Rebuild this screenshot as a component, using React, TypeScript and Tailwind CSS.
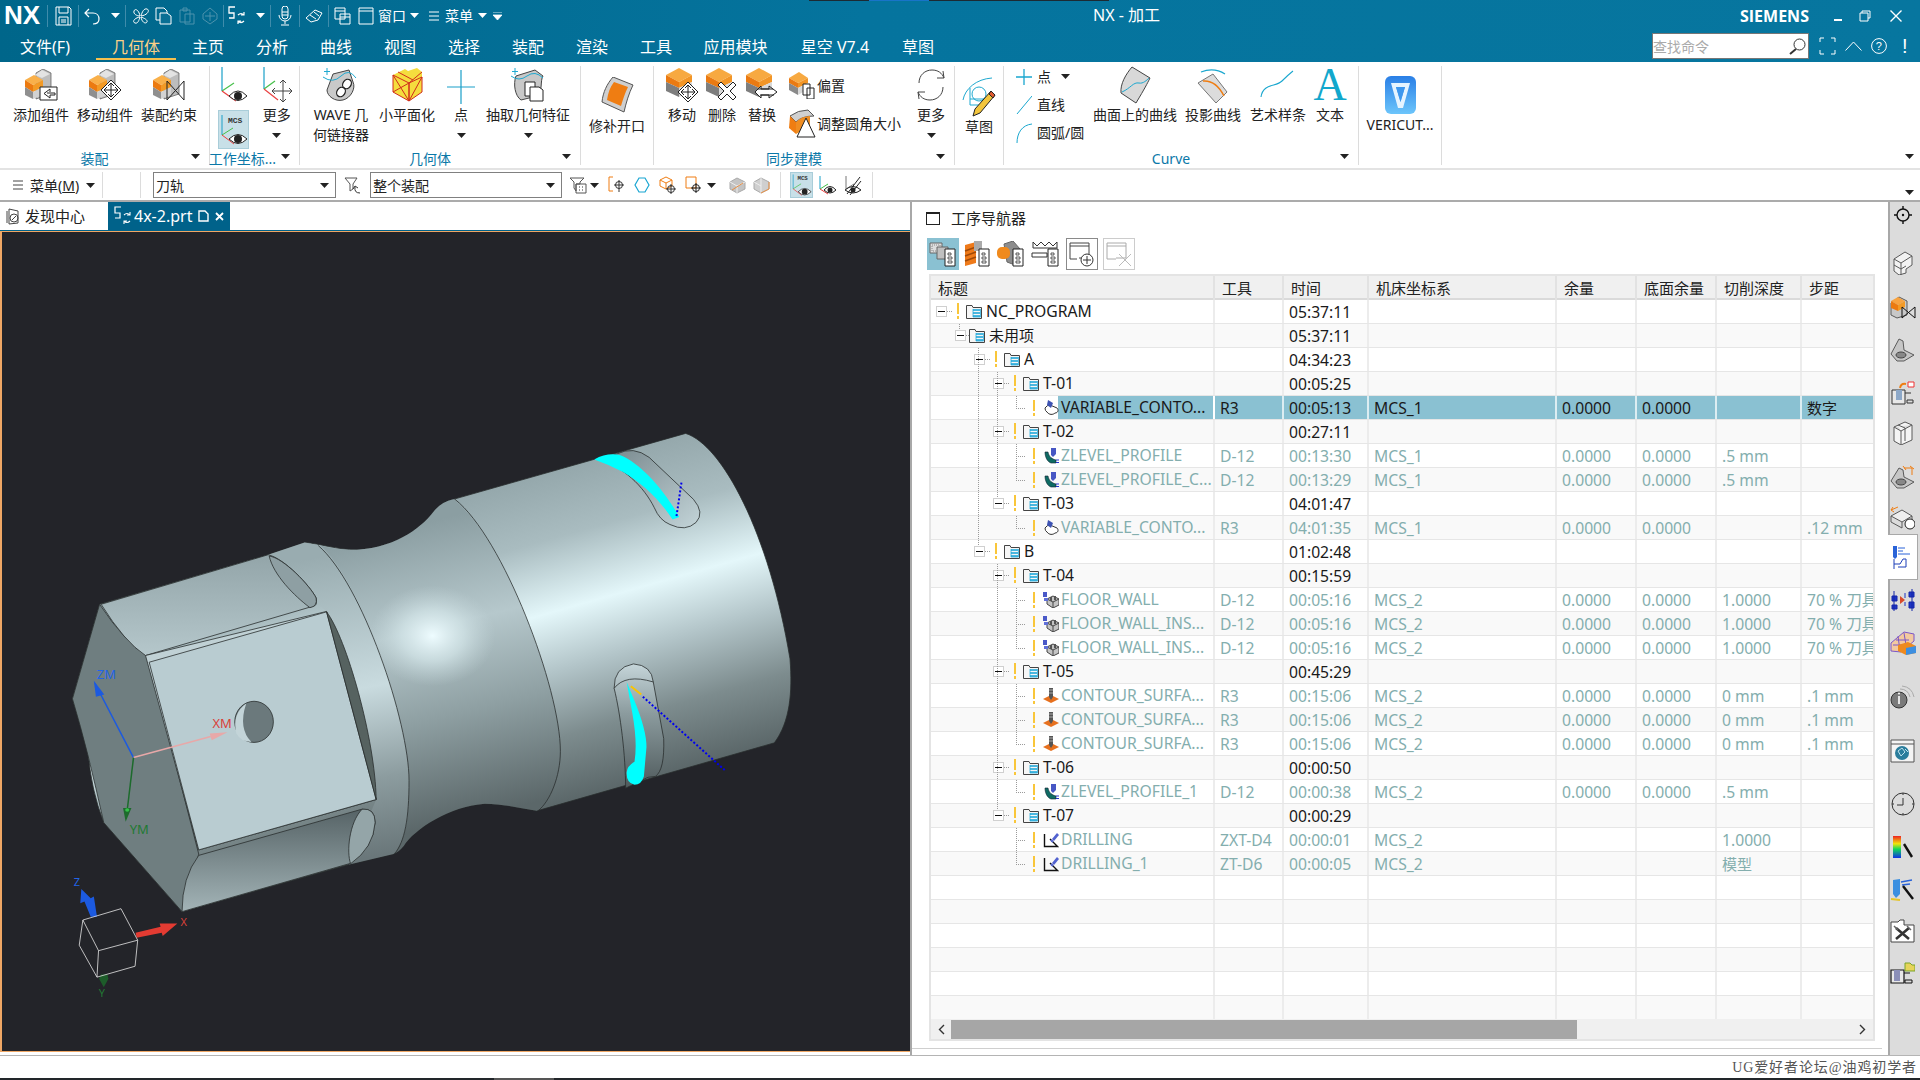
import React from "react";

const Svg = ({ w, h, children, className = "" }: { w: number; h: number; children: React.ReactNode; className?: string }) => (
  <svg width={w} height={h} viewBox={`0 0 ${w} ${h}`} className={`shrink-0 ${className}`} fill="none">
    {children}
  </svg>
);

const Caret = ({ c = "#222", className = "" }: { c?: string; className?: string }) => (
  <Svg w={9} h={5} className={className}>
    <path d="M0 0H9L4.5 5Z" fill={c} />
  </Svg>
);

const Sep = () => <div className="w-px h-[22px] bg-[#3f8cab] shrink-0" />;

const Slot = ({ w, children }: { w: string; children: React.ReactNode }) => (
  <div className={`${w} h-full flex items-center justify-center shrink-0`}>{children}</div>
);

/* ---------- title bar icons ---------- */
const W = "#ffffff";
const SaveI = () => (
  <Svg w={17} h={20}>
    <path d="M1 1H14L16 3V19H1Z M4 1V7H13V1 M4 19V11H13V19 M6 14H11 M6 16H11" stroke={W} />
  </Svg>
);
const UndoI = () => (
  <Svg w={18} h={18}>
    <path d="M6 2L2 6L6 10 M2 6H10C14 6 16 9 16 12S14 17 10 17" stroke={W} strokeWidth="1.2" />
  </Svg>
);
const FanI = () => (
  <Svg w={18} h={18}>
    <path d="M8 9C5 9 1 7 2 4S7 3 8 9ZM9 9C10 5 12 1 15 2S16 8 9 9ZM9 10C12 11 16 13 15 15S10 16 9 10ZM8 10C7 13 6 17 3 16S2 11 8 10Z" stroke={W} />
  </Svg>
);
const CopyI = () => (
  <Svg w={17} h={18}>
    <path d="M1 1H9L12 4V13H1Z" stroke={W} />
    <path d="M5 6H12L16 9V17H5Z" fill="#0a6f94" stroke={W} />
  </Svg>
);
const PasteI = () => (
  <Svg w={16} h={18}>
    <path d="M1 3H11V15H1Z M4 1H8V4H4Z M6 7H15V17H6Z" stroke="#4d93ad" />
  </Svg>
);
const TargetI = () => (
  <Svg w={18} h={18}>
    <path d="M9 1L16 7V12L9 17L2 12V7Z M9 5V14 M4 9H14" stroke="#4d93ad" />
  </Svg>
);
const SwapI = () => (
  <Svg w={18} h={20}>
    <path d="M7 1H1V7H6V12H1" stroke={W} strokeWidth="1.3" />
    <path d="M10 9Q13 6 16 9M16 6V9H13M16 15Q13 18 10 15M10 18V15H13" stroke={W} strokeWidth="1.2" />
  </Svg>
);
const MicI = () => (
  <Svg w={14} h={20}>
    <path d="M4 3a3 3 0 016 0V10a3 3 0 01-6 0ZM1 9a6 6 0 0012 0M7 15V18M3 19H11 M4 6H10 M4 9H10" stroke={W} />
  </Svg>
);
const EraserI = () => (
  <Svg w={18} h={16}>
    <path d="M1 10L10 2L17 5L13 12L6 14Z M5 7L11 11 M9 4L14 8" stroke={W} />
  </Svg>
);
const WinsI = () => (
  <Svg w={17} h={18}>
    <path d="M1 1H11V12H1Z M1 4H11 M6 7H16V17H6Z M6 10H16" stroke={W} />
  </Svg>
);
const WinI = () => (
  <Svg w={16} h={18}>
    <path d="M1 1H15V17H1Z M1 4H15" stroke={W} />
  </Svg>
);

/* ---------- ribbon icons ---------- */
const Stack = () => (
  <>
    <path d="M12 4L19 0L27 4V25L12 30Z" fill="#bdbdbd" stroke="#555" strokeWidth=".7" />
    <path d="M18 1L26 5L18 9L11 6Z" fill="#e3e3e3" />
    <path d="M1 11L10 6L19 11L9 16Z" fill="#f9b04a" />
    <path d="M1 11L9 16V23L1 18Z" fill="#ec7a10" />
    <path d="M9 16L19 11V18L9 23Z" fill="#f39a25" />
    <path d="M1 18L9 23V30L1 26Z" fill="#8f8f8f" />
    <path d="M9 23L19 18V26L9 30Z" fill="#d2d2d2" />
  </>
);
const Cube = () => (
  <>
    <path d="M1 7L14 0L27 7L14 14Z" fill="#f7a941" />
    <path d="M1 7L14 14V20L1 14Z" fill="#ea7a12" />
    <path d="M14 14L27 7V14L14 20Z" fill="#f29526" />
    <path d="M1 14L14 20V29L1 23Z" fill="#7e7e7e" />
    <path d="M14 20L27 14V23L14 29Z" fill="#d8d8d8" />
  </>
);
const MoveBadge = ({ x, y }: { x: number; y: number }) => (
  <g transform={`translate(${x} ${y})`}>
    <path d="M10 0L20 10L10 20L0 10Z" fill="#fff" stroke="#222" />
    <path d="M10 3V17M3 10H17M7 6L10 3L13 6M7 14L10 17L13 14M6 7L3 10L6 13M14 7L17 10L14 13" stroke="#222" />
  </g>
);
const XBadge = ({ x, y }: { x: number; y: number }) => (
  <g transform={`translate(${x} ${y})`}>
    <path d="M2 0L8 6L14 0L17 3L11 9L17 15L14 18L8 12L2 18L-1 15L5 9L-1 3Z" fill="#fff" stroke="#222" />
  </g>
);
const Add = () => (
  <Svg w={34} h={32}>
    <Stack />
    <path d="M16 18H33V31H16Z" fill="#fff" stroke="#222" />
    <path d="M31 24H23M26 20L20 24.500L26 29M26 20V23M26 26V29M31 24V26H26" stroke="#222" />
  </Svg>
);
const MoveC = () => (
  <Svg w={34} h={32}>
    <Stack />
    <MoveBadge x={13} y={11} />
  </Svg>
);
const Constr = () => (
  <Svg w={34} h={32}>
    <Stack />
    <path d="M15 12L32 31M32 12L15 31M15 12V31M32 12V31" stroke="#222" />
  </Svg>
);
const Wcs = () => (
  <Svg w={30} h={36}>
    <path d="M3 0V24" stroke="#1aa0c8" strokeWidth="1.2" />
    <path d="M3 24L15 16" stroke="#46c04a" strokeWidth="1.2" />
    <path d="M3 24L17 34" stroke="#e94040" strokeWidth="1.2" />
    <path d="M10 29Q19 19 28 29Q19 38 10 29Z" fill="#fff" stroke="#222" />
    <circle cx="19" cy="29" r="4" fill="#222" />
  </Svg>
);
const WcsMove = () => (
  <Svg w={32} h={36}>
    <path d="M3 0V22" stroke="#1aa0c8" strokeWidth="1.2" />
    <path d="M3 22L14 14" stroke="#46c04a" strokeWidth="1.2" />
    <path d="M3 22L17 33" stroke="#e94040" strokeWidth="1.2" />
    <path d="M22 13V35M11 24H31M19 16L22 13L25 16M19 32L22 35L25 32M14 21L11 24L14 27M28 21L31 24L28 27" stroke="#444" />
  </Svg>
);
const McsI = ({ small = false }: { small?: boolean }) => (
  <Svg w={small ? 22 : 30} h={small ? 24 : 34}>
    <g transform={small ? "scale(.72)" : undefined}>
      <path d="M3 2V22" stroke="#1aa0c8" />
      <path d="M3 22L14 15" stroke="#46c04a" />
      <path d="M3 22L15 31" stroke="#e94040" />
      <path d="M10 26Q19 17 28 26Q19 35 10 26Z" fill="#fff" stroke="#222" />
      <circle cx="19" cy="26" r="4" fill="#222" />
      <text x="9" y="10" fontSize="8" fontWeight="700" fill="#333" fontFamily="Liberation Mono">MCS</text>
    </g>
  </Svg>
);
const Wave = () => (
  <Svg w={36} h={34}>
    <path d="M10 6L26 2L30 14C33 20 28 30 20 32C12 34 4 28 4 22Z" fill="#c9c9c9" stroke="#444" />
    <path d="M0 9Q10 16 18 8T33 10" stroke="#1fa9d0" />
    <path d="M4 0V7M1 3.500H7" stroke="#1fa9d0" />
    <g stroke="#222" strokeWidth="1.3" fill="#fff">
      <ellipse cx="24" cy="16" rx="4" ry="5" transform="rotate(35 24 16)" />
      <ellipse cx="18" cy="24" rx="4" ry="5" transform="rotate(35 18 24)" />
    </g>
  </Svg>
);
const Facet = () => (
  <Svg w={32} h={34}>
    <path d="M2 7L14 1L17 3L26 0L31 4V24L18 33L2 24Z" fill="#f5dd3e" />
    <path d="M2 7L18 15V33L2 24Z M18 15L31 9V24L18 33Z M7 4L22 12 M2 7L18 33 M18 15L2 24 M31 4L18 15 M18 33L31 9" stroke="#d02c1c" />
  </Svg>
);
const Plus = () => (
  <Svg w={28} h={34}>
    <path d="M14 0V34M0 17H28" stroke="#1a9fc9" strokeWidth="1.2" />
  </Svg>
);
const Extract = () => (
  <Svg w={34} h={34}>
    <path d="M5 8L24 2L32 8C29 12 32 24 26 28L10 32C4 28 2 16 5 8Z" fill="#c8c8c8" stroke="#444" />
    <path d="M0 8Q8 14 16 8T32 10" stroke="#1fa9d0" />
    <path d="M4 0V7M1 3.500H7" stroke="#1fa9d0" />
    <path d="M14 14H24V28H14Z" fill="#fff" stroke="#222" />
    <path d="M19 19H28L32 22V33H19Z" fill="#fff" stroke="#222" />
  </Svg>
);
const Patch = () => (
  <Svg w={34} h={36}>
    <path d="M13 0L33 8C29 16 26 26 24 35L2 25C3 15 7 7 13 0Z" fill="#cfcfcf" stroke="#555" />
    <path d="M14 5L28 10C25 16 23 22 21 29L7 23C8 16 10 10 14 5Z" fill="#ef7d12" />
  </Svg>
);
const CubeBadge = ({ k }: { k: "m" | "x" | "s" }) => (
  <Svg w={34} h={34}>
    <Cube />
    {k === "m" && <MoveBadge x={13} y={14} />}
    {k === "x" && <XBadge x={14} y={14} />}
    {k === "s" && (
      <g stroke="#222" fill="#fff">
        <path d="M10 24L16 18V21H24V18L32 24L24 30V27H16V30Z" />
        <path d="M13 21H28M15 27H29" />
      </g>
    )}
  </Svg>
);
const Offset = () => (
  <Svg w={28} h={28}>
    <path d="M1 7L11 1L20 7L10 12Z" fill="#f7a941" />
    <path d="M1 7L10 12V17L1 12Z" fill="#ea7a12" />
    <path d="M10 12L20 7V12L10 17Z" fill="#f29526" />
    <path d="M1 12L10 17V24L1 19Z" fill="#8a8a8a" />
    <path d="M10 17L20 12V18L10 24Z" fill="#d8d8d8" />
    <path d="M15 13H22V24H15Z M19 17H26V28H19Z" fill="#fff" stroke="#222" />
  </Svg>
);
const Fillet = () => (
  <Svg w={28} h={30}>
    <path d="M2 8Q10 2 20 2L26 8Q14 8 8 14Z" fill="#d0d0d0" stroke="#555" />
    <path d="M2 8L8 14V26L1 20Z" fill="#ef7d12" />
    <path d="M8 14Q14 8 22 8V18L8 26Z" fill="#ef8d22" />
    <path d="M18 10L27 29H9Z" fill="#fff" stroke="#222" />
  </Svg>
);
const Refresh = () => (
  <Svg w={30} h={36}>
    <path d="M3 16C3 8 9 3 16 3C22 3 26 6 28 11M27 4L28 11L21 11" stroke="#444" />
    <path d="M27 20C27 28 21 33 14 33C8 33 4 30 2 25M3 32L2 25L9 25" stroke="#444" />
  </Svg>
);
const Sketch = () => (
  <Svg w={34} h={40}>
    <path d="M1 23C3 12 14 2 30 1" stroke="#1fa9d0" />
    <path d="M8 22H25M8 11V28H25" stroke="#1fa9d0" />
    <circle cx="17" cy="17" r="7" stroke="#1fa9d0" />
    <path d="M29 14L33 18L18 36L11 39L13 32Z" fill="#f3c53c" stroke="#222" />
    <path d="M29 14L33 18L31 21L27 17Z" fill="#e05a30" stroke="#222" />
  </Svg>
);
const OnSurf = () => (
  <Svg w={32} h={38}>
    <path d="M13 1L31 12C28 18 26 22 17 37L2 27C1 18 7 8 13 1Z" fill="#d8d8d8" stroke="#444" />
    <path d="M3 26C12 22 14 16 20 17C24 18 28 14 30 12" stroke="#1aa7cf" />
  </Svg>
);
const Project = () => (
  <Svg w={34} h={38}>
    <path d="M5 6Q18 1 29 8" stroke="#1aa7cf" strokeWidth="1.3" />
    <path d="M2 17L17 8L31 26L20 37Z" fill="#dcdcdc" stroke="#777" />
    <path d="M7 15Q20 14 28 30" stroke="#ef7d12" strokeWidth="1.5" />
  </Svg>
);
const Spline = () => (
  <Svg w={36} h={32}>
    <path d="M1 28C3 14 16 18 22 12S28 6 33 2" stroke="#1aa7cf" strokeWidth="1.1" />
  </Svg>
);
const Vericut = () => (
  <Svg w={33} h={40}>
    <defs>
      <linearGradient id="vc" x1="0" y1="0" x2="0" y2="1">
        <stop offset="0" stopColor="#2a7fe6" />
        <stop offset="1" stopColor="#6cc5fb" />
      </linearGradient>
    </defs>
    <rect x="1" y="1" width="31" height="38" rx="6" fill="url(#vc)" />
    <path d="M7 8H26L19 33H14Z M12 12L16.500 27L21 12Z" fill="#e6f4ff" fillRule="evenodd" />
    <path d="M12 12H21L16.500 27Z" fill="#3e97ee" />
  </Svg>
);
const CurvePlus = () => (
  <Svg w={16} h={16}>
    <path d="M8 0V16M0 8H16" stroke="#1aa7cf" strokeWidth="1.3" />
  </Svg>
);
const LineI = () => (
  <Svg w={16} h={20}>
    <path d="M1 19L16 1" stroke="#1aa7cf" />
  </Svg>
);
const ArcI = () => (
  <Svg w={16} h={20}>
    <path d="M1 20C1 10 6 2 16 1" stroke="#1aa7cf" />
  </Svg>
);

const Tool = ({ w, label, icon }: { w: string; label: React.ReactNode; icon: React.ReactNode }) => (
  <div className={`${w} flex flex-col items-center shrink-0 mt-[5px]`}>
    <div className="h-[36px] flex items-center justify-center">{icon}</div>
    <div className="mt-[2px] text-[14px] leading-[20px] text-[#222] text-center whitespace-nowrap">{label}</div>
  </div>
);

const Group = ({ w, label, caret, children, labelClass = "" }: { w: string; label: string; caret?: boolean; children: React.ReactNode; labelClass?: string }) => (
  <div className={`${w} shrink-0 h-[99px] flex flex-col border-r border-[#dcdcdc] mt-[4px]`}>
    <div className="flex-1 flex min-h-0 -mt-[4px]">{children}</div>
    <div className="h-[16px] relative text-[14px] leading-[20px] text-[#0b78a8] text-center whitespace-nowrap pr-[20px]">
      <span className={labelClass}>{label}</span>
      {caret && <Caret className="absolute right-[9px] top-[5px]" />}
    </div>
  </div>
);

const Ribbon = () => (
  <div className="h-[108px] shrink-0 bg-white border-b-2 border-[#e3e3e3] flex items-start relative">
    <Group w="w-[210px]" label="装配" caret>
      <div className="flex pl-[9px]">
        <Tool w="w-[64px]" label="添加组件" icon={<Add />} />
        <Tool w="w-[64px]" label="移动组件" icon={<MoveC />} />
        <Tool w="w-[64px]" label="装配约束" icon={<Constr />} />
      </div>
    </Group>
    <Group w="w-[90px]" label="工作坐标..." caret labelClass="-ml-[4px]">
      <div className="w-[45px] flex flex-col items-center pt-[5px] pl-[3px]">
        <Wcs />
        <div className="mt-[7px] w-[31px] h-[40px] bg-[#c8e0e8] border border-[#a9cdd9] flex items-center justify-center"><McsI /></div>
      </div>
      <div className="w-[45px] flex flex-col items-center pt-[5px]">
        <WcsMove />
        <div className="text-[14px] leading-[20px] text-[#222] mt-[2px]">更多</div>
        <Caret className="mt-[8px]" />
      </div>
    </Group>
    <Group w="w-[281px]" label="几何体" caret>
      <div className="flex pl-[4px]">
        <Tool w="w-[74px]" icon={<Wave />} label={<>WAVE 几<br />何链接器</>} />
        <Tool w="w-[58px]" icon={<Facet />} label="小平面化" />
        <Tool w="w-[50px]" icon={<div className="pt-[4px]"><Plus /></div>} label={<div className="flex flex-col items-center">点<Caret className="mt-[8px]" /></div>} />
        <Tool w="w-[84px]" icon={<Extract />} label={<div className="flex flex-col items-center">抽取几何特征<Caret className="mt-[8px]" /></div>} />
      </div>
    </Group>
    <Group w="w-[73px]" label="">
      <div className="w-full flex flex-col items-center pt-[15px]">
        <Patch />
        <div className="mt-[3px] text-[14px] leading-[20px] text-[#222] whitespace-nowrap">修补开口</div>
      </div>
    </Group>
    <Group w="w-[301px]" label="同步建模" caret>
      <div className="flex pl-[8px]">
        <Tool w="w-[40px]" icon={<CubeBadge k="m" />} label="移动" />
        <Tool w="w-[40px]" icon={<CubeBadge k="x" />} label="删除" />
        <Tool w="w-[40px]" icon={<CubeBadge k="s" />} label="替换" />
        <div className="w-[134px] flex flex-col pl-[6px] pt-[8px]">
          <div className="flex items-center h-[30px] gap-[1px] text-[14px] text-[#222]"><Offset />偏置</div>
          <div className="flex items-center h-[30px] mt-[8px] gap-[1px] text-[14px] text-[#222] whitespace-nowrap"><Fillet />调整圆角大小</div>
        </div>
        <div className="w-[30px] flex flex-col items-center pt-[5px]">
          <Refresh />
          <div className="mt-[2px] text-[14px] leading-[20px] text-[#222] whitespace-nowrap">更多</div>
          <Caret className="mt-[8px]" />
        </div>
      </div>
    </Group>
    <Group w="w-[49px]" label="">
      <div className="w-full flex flex-col items-center pt-[15px]">
        <Sketch />
        <div className="text-[14px] leading-[20px] text-[#222] whitespace-nowrap">草图</div>
      </div>
    </Group>
    <Group w="w-[355px]" label="Curve" caret>
      <div className="flex">
        <div className="w-[89px] flex flex-col pl-[12px] pt-[1px] text-[14px] text-[#222] shrink-0">
          <div className="h-[27px] flex items-center gap-[5px]"><CurvePlus /><span>点</span><Caret className="ml-[5px]" /></div>
          <div className="h-[27px] flex items-center gap-[5px] mt-[1px]"><LineI />直线</div>
          <div className="h-[27px] flex items-center gap-[5px] mt-[1px]"><ArcI /><span className="whitespace-nowrap">圆弧/圆</span></div>
        </div>
        <Tool w="w-[84px]" icon={<OnSurf />} label="曲面上的曲线" />
        <Tool w="w-[72px]" icon={<Project />} label="投影曲线" />
        <Tool w="w-[58px]" icon={<Spline />} label="艺术样条" />
        <Tool w="w-[46px]" icon={<span className="font-['Liberation_Serif',serif] text-[46px] leading-[36px] text-[#12a7cc]">A</span>} label="文本" />
      </div>
    </Group>
    <Group w="w-[83px]" label="">
      <div className="w-full flex flex-col items-center pt-[13px]">
        <Vericut />
        <div className="text-[14px] leading-[20px] text-[#222]">VERICUT...</div>
      </div>
    </Group>
    <Caret className="absolute right-[6px] top-[154px] -mt-[62px]" />
  </div>
);

/* ---------- selection bar ---------- */
const Funnel = () => (
  <Svg w={18} h={18}>
    <path d="M1 2H13L9 8V13L6 15V8Z" stroke="#555" />
    <path d="M16 17Q10 17 11 11M9 13L11 10L14 12" stroke="#333" />
  </Svg>
);
const SelBox = ({ w, label }: { w: string; label: string }) => (
  <div className={`${w} h-[26px] border border-[#808080] flex items-center justify-between pl-[2px] pr-[6px] text-[14px] text-[#222] shrink-0`}>
    {label}
    <Caret />
  </div>
);
const SelBar = () => (
  <div className="h-[32px] shrink-0 border-b-2 border-[#ababab] bg-white flex items-center relative text-[14px] text-[#222]">
    <div className="w-[102px] shrink-0 flex items-center pl-[13px] gap-[7px]">
      <Svg w={10} h={10}><path d="M0 1H10M0 5H10M0 9H10" stroke="#444" /></Svg>
      <span className="whitespace-nowrap">菜单(<u>M</u>)</span>
      <Caret />
    </div>
    <div className="w-px h-[26px] bg-[#dcdcdc]" />
    <div className="w-[37px]" />
    <div className="w-px h-[26px] bg-[#dcdcdc]" />
    <div className="w-[12px]" />
    <SelBox w="w-[183px]" label="刀轨" />
    <Slot w="w-[34px]"><Funnel /></Slot>
    <SelBox w="w-[192px]" label="整个装配" />
    <div className="w-[7px]" />
    <Svg w={18} h={18}><path d="M1 2H15L11 6V8H7V15L5 12V6Z M7 8H17V17H7Z" stroke="#555" /><path d="M10 11H11M13 11H14M10 14H11M13 14H14" stroke="#333" /></Svg>
    <Caret className="ml-[3px]" />
    <div className="w-[9px]" />
    <Svg w={18} h={18}><path d="M5 1H1V15H5" stroke="#ef7d12" /><path d="M11 4V16M6 9H16" stroke="#333" /><circle cx="11" cy="9" r="3.500" stroke="#333" /></Svg>
    <div className="w-[8px]" />
    <Svg w={16} h={16}><path d="M5 1H11L15 8L11 15H5L1 8Z" stroke="#18a5d2" strokeWidth="1.2" /></Svg>
    <div className="w-[9px]" />
    <Svg w={18} h={18}><path d="M7 1L13 4V10L7 13L1 10V4Z M1 4L7 7L13 4M7 7V13" stroke="#ef7d12" /><circle cx="12" cy="13" r="3.500" stroke="#333" /><path d="M12 8V18M7 13H17" stroke="#333" /></Svg>
    <div className="w-[8px]" />
    <Svg w={18} h={18}><path d="M1 1H11V12H1Z" stroke="#ef7d12" /><circle cx="11" cy="12" r="3.500" stroke="#222" /><path d="M11 7V17M6 12H16" stroke="#222" /></Svg>
    <Caret className="ml-[4px]" />
    <div className="w-[13px]" />
    <Svg w={17} h={17}><path d="M1 5L8 1L16 5V12L8 16L1 12Z" fill="#c4c4c4" stroke="#aaa" /><path d="M1 5L8 9L16 5M8 9V16" stroke="#eee" /><path d="M3 13L14 6" stroke="#e89045" /></Svg>
    <div className="w-[7px]" />
    <Svg w={17} h={17}><path d="M1 5L8 1L16 5V12L8 16L1 12Z" fill="#cfcfcf" stroke="#aaa" /><path d="M8 1V16M1 5L8 9" stroke="#eee" /><path d="M16 5V12L8 16" stroke="#e89045" /></Svg>
    <div className="w-[10px]" />
    <div className="w-px h-[26px] bg-[#dcdcdc]" />
    <div className="w-[9px]" />
    <div className="w-[23px] h-[26px] bg-[#c8e0e8] border border-[#a9cdd9] flex items-center justify-center"><McsI small /></div>
    <div className="w-[3px]" />
    <div className="w-[22px] flex justify-center"><Svg w={18} h={20}><path d="M2 1V14" stroke="#1aa0c8" /><path d="M2 14L10 9" stroke="#46c04a" /><path d="M2 14L10 19" stroke="#e94040" /><path d="M6 15Q12 8 18 15Q12 21 6 15Z" fill="#fff" stroke="#222" /><circle cx="12" cy="15" r="2.500" fill="#222" /></Svg></div>
    <div className="w-[4px]" />
    <div className="w-[22px] flex justify-center"><Svg w={18} h={20}><path d="M2 1V14L10 9" stroke="#777" /><path d="M1 15Q9 8 17 15Q9 21 1 15Z" fill="#fff" stroke="#222" /><circle cx="9" cy="15" r="2.500" fill="#222" /><path d="M3 19L16 2M6 20L17 6" stroke="#222" /></Svg></div>
    <div className="w-[8px]" />
    <div className="w-px h-[26px] bg-[#dcdcdc]" />
    <Caret className="absolute right-[6px] top-[20px]" />
  </div>
);

/* ---------- CAD view ---------- */
const NS = { vectorEffect: "non-scaling-stroke" as const };
const CadView = () => (
  <svg viewBox="0 232 910 821" className="w-full h-full block" preserveAspectRatio="none">
    <defs>
      <linearGradient id="body" gradientUnits="userSpaceOnUse" x1="1150" y1="90" x2="1400" y2="800">
        <stop offset="0" stopColor="#95a8ac" />
        <stop offset=".2" stopColor="#a9bcc0" />
        <stop offset=".42" stopColor="#e4f7fa" />
        <stop offset=".6" stopColor="#b2c4c8" />
        <stop offset=".8" stopColor="#7d8c8e" />
        <stop offset="1" stopColor="#5b6769" />
      </linearGradient>
      <radialGradient id="glow" gradientUnits="userSpaceOnUse" cx="825" cy="515" r="120">
        <stop offset="0" stopColor="#eefcff" />
        <stop offset=".5" stopColor="#d5e7ea" stopOpacity=".7" />
        <stop offset="1" stopColor="#c4d6da" stopOpacity="0" />
      </radialGradient>
      <linearGradient id="neck" gradientUnits="userSpaceOnUse" x1="760" y1="260" x2="960" y2="930">
        <stop offset="0" stopColor="#8b9ea2" />
        <stop offset=".35" stopColor="#b6c8cc" />
        <stop offset=".65" stopColor="#8e9fa2" />
        <stop offset="1" stopColor="#5b6769" />
      </linearGradient>
      <linearGradient id="flange" gradientUnits="userSpaceOnUse" x1="640" y1="320" x2="800" y2="1020">
        <stop offset="0" stopColor="#99acb0" />
        <stop offset=".45" stopColor="#c9dbdf" />
        <stop offset=".75" stopColor="#8c9c9f" />
        <stop offset="1" stopColor="#6a777a" />
      </linearGradient>
      <linearGradient id="pocketU" x1="0" y1="0" x2="0" y2="1">
        <stop offset="0" stopColor="#93a5a9" />
        <stop offset="1" stopColor="#b5c7cb" />
      </linearGradient>
      <linearGradient id="pocketL" x1="0" y1="0" x2="0" y2="1">
        <stop offset="0" stopColor="#566366" />
        <stop offset="1" stopColor="#a3b4b7" />
      </linearGradient>
      <linearGradient id="slotT" x1="0" y1="0" x2="1" y2="1">
        <stop offset="0" stopColor="#75858a" />
        <stop offset="1" stopColor="#c3d4d8" />
      </linearGradient>
      <linearGradient id="slotL" x1="0" y1="0" x2="0" y2="1">
        <stop offset="0" stopColor="#c5d5d9" />
        <stop offset=".4" stopColor="#8b9b9e" />
        <stop offset="1" stopColor="#4f5a5c" />
      </linearGradient>
    </defs>
    <g transform="translate(0 420) scale(.523 .4209)" stroke="#2a2e2f" strokeWidth=".8" fill="none">
      <path {...NS} fill="url(#body)" d="M345 1172L195 960Q170 880 165 790L135 665L187 440L510 322L580 293C610 295 640 310 680 310C760 305 810 250 830 215Q845 195 865 190L1310 33C1380 60 1470 270 1510 570C1515 650 1510 720 1480 770L1025 932C990 925 960 915 925 915C860 920 790 975 770 1015Q760 1030 750 1035L665 1060Z" />
      <path fill="url(#neck)" stroke="none" d="M610 300C640 310 660 310 680 310C760 305 810 250 830 215Q845 195 865 190C960 280 1070 640 1070 790C1070 850 1050 910 1025 932C990 925 960 915 925 915C860 920 790 975 770 1015Q760 1030 750 1035C775 1000 780 950 780 860C780 720 690 390 610 300Z" />
      <ellipse cx="825" cy="515" rx="120" ry="120" fill="url(#glow)" stroke="none" />
      <path fill="url(#flange)" stroke="none" d="M580 293L610 300C690 390 780 720 780 860C780 950 775 1000 750 1035L665 1060L717 905L622 458L510 322Z" />
      <path {...NS} d="M868 190C960 280 1070 640 1070 790C1070 850 1050 910 1027 932" />
      <path {...NS} d="M606 300C690 390 780 720 780 860C780 950 772 1005 752 1035" />
      <path {...NS} fill="#6f7e80" d="M187 440L135 665Q165 790 195 960L345 1172L377 1035L280 565Q235 530 187 440Z" />
      <path {...NS} fill="url(#pocketU)" d="M190 440L510 322C540 330 590 395 602 425Q605 445 595 445L275 562Q235 530 190 440Z" />
      <path {...NS} fill="#8e9fa3" d="M512 325C540 330 590 395 602 425Q605 445 590 448C560 420 520 370 512 325Z" />
      <path {...NS} fill="#c0d1d5" d="M275 562L622 457L717 905L377 1025Z" />
      <path {...NS} fill="#b9ccd1" d="M282 578L622 458L717 905L377 1025Z" />
      <path {...NS} fill="#566260" d="M622 458C660 520 715 760 717 905Z" />
      <path {...NS} fill="url(#pocketL)" d="M377 1038L690 928Q715 925 715 960Q712 1020 665 1058L345 1172Q345 1090 377 1038Z" />
      <path {...NS} fill="#94a5a8" d="M690 928C665 960 660 1030 668 1058Q712 1020 715 960Q715 925 690 928Z" />
      <ellipse {...NS} cx="483" cy="720" rx="37" ry="49" fill="#6b797c" />
      <path fill="#c3d4d8" stroke="none" d="M468 676Q440 700 449 748Q458 768 478 768Q452 735 468 676Z" />
      <path {...NS} fill="url(#slotT)" d="M1178 82Q1210 62 1240 90L1325 190Q1347 222 1330 245Q1310 268 1280 250Q1260 240 1250 210C1230 160 1190 110 1140 95Z" />
      <path fill="#00ffff" stroke="none" d="M1135 95Q1160 78 1185 85C1225 105 1270 170 1298 232L1285 238C1260 190 1225 150 1190 125Q1165 108 1135 95Z" />
      <path {...NS} fill="url(#slotL)" d="M1173 640Q1172 590 1210 582Q1245 585 1248 625L1268 760Q1270 835 1252 850L1238 852L1195 878C1195 800 1185 700 1173 640Z" />
      <path {...NS} d="M1173 640Q1195 605 1248 625" />
      <path fill="#00ffff" stroke="none" d="M1197 625L1212 670Q1235 740 1235 780L1230 850Q1225 870 1212 870Q1196 865 1197 840Q1198 825 1212 815Q1218 770 1208 700Z" />
      <path d="M1205 635L1225 655" stroke="#f8c400" strokeWidth="2" {...NS} />
      <path d="M1228 660L1385 835" stroke="#0000ee" strokeWidth="2" strokeDasharray="2 2" {...NS} />
      <path d="M1302 150L1292 235" stroke="#0000ee" strokeWidth="2" strokeDasharray="2 2" {...NS} />
      <path d="M252 805L178 628" stroke="#1c5ae0" strokeWidth="1.5" {...NS} />
      <path stroke="none" fill="#1c5ae0" d="M176 622L196 655L180 660Z" />
      <path d="M252 805L400 755" stroke="#e8a8a8" strokeWidth="1.5" {...NS} />
      <path stroke="none" fill="#e8a8a8" d="M432 745L398 748L402 764Z" />
      <path d="M252 805L240 930" stroke="#1d6b2c" strokeWidth="1.5" {...NS} />
      <path stroke="none" fill="#1d6b2c" d="M237 958L232 925L248 925Z" />
      <circle cx="240" cy="930" r="4" fill="#35c24a" stroke="none" />
      <path stroke="none" fill="#1c5ae0" d="M152 1118L170 1140L176 1136L182 1184L170 1184L158 1148L150 1152Z" />
      <path stroke="none" fill="#e33b32" d="M336 1200L302 1200L304 1208L256 1222L258 1234L306 1222L308 1230Z" />
      <path stroke="none" fill="#1d5c2a" d="M195 1352L186 1332L190 1322L202 1322L204 1332Z" />
      <g stroke="#e6e6e6">
        <path {...NS} d="M155 1192L228 1165L260 1240L185 1265Z" />
        <path {...NS} d="M185 1265L182 1328L255 1302L260 1240" />
        <path {...NS} d="M155 1192L148 1252L182 1328" />
      </g>
    </g>
    <g className="font-['Noto_Sans',sans-serif]" fontSize="13">
      <text x="95" y="680" fill="#2264e8">ZM</text>
      <text x="211" y="729" fill="#d9413a">XM</text>
      <text x="128" y="835" fill="#217a33">YM</text>
      <text x="72" y="888" fill="#2264e8" fontSize="11">Z</text>
      <text x="179" y="928" fill="#d9413a" fontSize="11">X</text>
      <text x="97" y="999" fill="#217a33" fontSize="11">Y</text>
    </g>
  </svg>
);

/* ---------- operation tree ---------- */
const Exclaim = () => (
  <Svg w={2} h={16}>
    <path d="M0 0H2V11H0Z M0 13H2V16H0Z" fill="#f9c63a" />
  </Svg>
);
const Folder = () => (
  <Svg w={16} h={15}>
    <path d="M.5 14.500V1.500H6L7 3.500H15.500V14.500Z" fill="#f6f6f6" stroke="#444" />
    <path d="M7 6H14M7 9H14M7 12H14" stroke="#13a3d8" strokeWidth="1.6" />
    <path d="M7 5V13H14.500V5" stroke="#13a3d8" strokeWidth=".7" />
  </Svg>
);
const Expander = () => (
  <div className="relative w-[11px] h-[11px] border border-[#d0d0d0] bg-white flex items-center justify-center shrink-0">
    <div className="w-[7px] h-px bg-[#111]" />
  </div>
);
const OpVar = () => (
  <Svg w={15} h={16}>
    <path d="M1 8Q3 5 6 5L13 8C15 10 14 13 11 13C9 15 5 15 3 12Q1 11 1 8Z" fill="#fff" stroke="#333" />
    <path d="M4 0L9 3L7 8L3 5Z" fill="#3d53b3" />
  </Svg>
);
const OpZ = () => (
  <Svg w={15} h={16}>
    <path d="M1 4H4C5 9 8 11 12 12V15H7C4 14 1 10 1 4Z" fill="#0e6b63" stroke="#123" strokeWidth=".6" />
    <path d="M7 0H12V6L9 9L7 7Z" fill="#4757c4" />
    <path d="M12 12H15M12 14.500H15" stroke="#2233cc" />
  </Svg>
);
const OpFloor = () => (
  <Svg w={16} h={16}>
    <path d="M4 7L10 4L16 7V13L10 16L4 12Z" fill="#c4c4c4" stroke="#444" />
    <path d="M4 7L10 10L16 7M10 10V16" stroke="#444" />
    <path d="M8 5V9M12 4V8" stroke="#555" strokeWidth="2" />
    <path d="M0 0H4V5H0Z" fill="#4a59c8" />
    <path d="M1 6H5V9H1Z" fill="#6170d8" />
  </Svg>
);
const OpContour = () => (
  <Svg w={16} h={16}>
    <path d="M0 11L8 7L16 11L8 15Z" fill="#e6701e" />
    <path d="M6 0H10V9L8 12L6 9Z" fill="#555" />
    <path d="M6 2H10M6 5H10" stroke="#aaa" />
  </Svg>
);
const OpDrill = () => (
  <Svg w={16} h={16}>
    <path d="M1.500 2V14.500H14.500L7 7" stroke="#111" strokeWidth="1.4" />
    <path d="M9 7L14 1L16 3L11 9Z" fill="#5262cf" />
    <path d="M8 8L10 10" stroke="#5262cf" strokeWidth="2" />
  </Svg>
);

type Row = {
  lv: number;
  name: string;
  op?: React.ReactNode;
  tool?: string;
  time: string;
  mcs?: string;
  st?: string;
  fl?: string;
  depth?: string;
  step?: string;
  sel?: boolean;
  noEx?: boolean;
};
const m1 = "MCS_1";
const m2 = "MCS_2";
const z = "0.0000";
const rows: Row[] = [
  { lv: 0, name: "NC_PROGRAM", time: "05:37:11" },
  { lv: 1, name: "未用项", time: "05:37:11", noEx: true },
  { lv: 2, name: "A", time: "04:34:23" },
  { lv: 3, name: "T-01", time: "00:05:25" },
  { lv: 4, name: "VARIABLE_CONTO...", op: <OpVar />, tool: "R3", time: "00:05:13", mcs: m1, st: z, fl: z, step: "数字", sel: true },
  { lv: 3, name: "T-02", time: "00:27:11" },
  { lv: 4, name: "ZLEVEL_PROFILE", op: <OpZ />, tool: "D-12", time: "00:13:30", mcs: m1, st: z, fl: z, depth: ".5 mm" },
  { lv: 4, name: "ZLEVEL_PROFILE_C...", op: <OpZ />, tool: "D-12", time: "00:13:29", mcs: m1, st: z, fl: z, depth: ".5 mm" },
  { lv: 3, name: "T-03", time: "04:01:47" },
  { lv: 4, name: "VARIABLE_CONTO...", op: <OpVar />, tool: "R3", time: "04:01:35", mcs: m1, st: z, fl: z, step: ".12 mm" },
  { lv: 2, name: "B", time: "01:02:48" },
  { lv: 3, name: "T-04", time: "00:15:59" },
  { lv: 4, name: "FLOOR_WALL", op: <OpFloor />, tool: "D-12", time: "00:05:16", mcs: m2, st: z, fl: z, depth: "1.0000", step: "70 % 刀具" },
  { lv: 4, name: "FLOOR_WALL_INS...", op: <OpFloor />, tool: "D-12", time: "00:05:16", mcs: m2, st: z, fl: z, depth: "1.0000", step: "70 % 刀具" },
  { lv: 4, name: "FLOOR_WALL_INS...", op: <OpFloor />, tool: "D-12", time: "00:05:16", mcs: m2, st: z, fl: z, depth: "1.0000", step: "70 % 刀具" },
  { lv: 3, name: "T-05", time: "00:45:29" },
  { lv: 4, name: "CONTOUR_SURFA...", op: <OpContour />, tool: "R3", time: "00:15:06", mcs: m2, st: z, fl: z, depth: "0 mm", step: ".1 mm" },
  { lv: 4, name: "CONTOUR_SURFA...", op: <OpContour />, tool: "R3", time: "00:15:06", mcs: m2, st: z, fl: z, depth: "0 mm", step: ".1 mm" },
  { lv: 4, name: "CONTOUR_SURFA...", op: <OpContour />, tool: "R3", time: "00:15:06", mcs: m2, st: z, fl: z, depth: "0 mm", step: ".1 mm" },
  { lv: 3, name: "T-06", time: "00:00:50" },
  { lv: 4, name: "ZLEVEL_PROFILE_1", op: <OpZ />, tool: "D-12", time: "00:00:38", mcs: m2, st: z, fl: z, depth: ".5 mm" },
  { lv: 3, name: "T-07", time: "00:00:29" },
  { lv: 4, name: "DRILLING", op: <OpDrill />, tool: "ZXT-D4", time: "00:00:01", mcs: m2, depth: "1.0000" },
  { lv: 4, name: "DRILLING_1", op: <OpDrill />, tool: "ZT-D6", time: "00:00:05", mcs: m2, depth: "模型" },
];

const COLS = "grid grid-cols-[284px_69px_85px_188px_80px_80px_85px_71px]";
const indent = ["pl-[5px]", "pl-[24px]", "pl-[43px]", "pl-[62px]", "pl-[102px]"];
const GREY = "text-[#84aeae]";
const hasCjk = (s?: string) => !!s && /^[\u4e00-\u9fff]+$/.test(s);

const Cell = ({ v, cls = "", sel }: { v?: string; cls?: string; sel?: boolean }) => (
  <div className={`h-full pl-[5px] overflow-hidden whitespace-nowrap border-r-2 last:border-r-0 ${sel ? "border-white/70" : "border-[#ececec]"} ${hasCjk(v) ? "text-[15px]" : ""} ${cls}`}>{v}</div>
);

const TreeRow = ({ r, i }: { r: Row; i: number }) => {
  const isOp = r.lv === 4;
  const g = isOp && !r.sel ? GREY : "text-[#1a1a1a]";
  return (
    <div className={`${COLS} h-[24px] leading-[25px] text-[15.7px] border-b border-[#e6e6e6] ${r.sel ? "bg-[#8ac1d2]" : i % 2 ? "bg-[#f9f9f9]" : "bg-white"}`}>
      <div className={`h-full overflow-hidden whitespace-nowrap border-r-2 ${r.sel ? "border-white/70 bg-[linear-gradient(to_right,white_127px,#8ac1d2_127px)]" : "border-[#ececec] bg-transparent"} flex items-center ${indent[r.lv]}`}>
        {!isOp && (
          <>
            <Expander />
            <Svg w={6} h={2} className={r.noEx ? "" : "mr-[4px]"}><path d="M0 .5H6" stroke="#999" strokeDasharray="1 1" /></Svg>
          </>
        )}
        {!r.noEx && <div className={isOp ? "mr-[8px]" : "mr-[7px] -mt-[2px]"}><Exclaim /></div>}
        {isOp ? <div className="w-[16px] mr-[2px] flex justify-center">{r.op}</div> : <div className={r.noEx ? "-ml-[3px] mr-[4px]" : "mr-[4px]"}><Folder /></div>}
        <span className={`${g} ${hasCjk(r.name) ? "text-[15px]" : ""}`}>{r.name}</span>
      </div>
      <Cell v={r.tool} cls={g} sel={r.sel} />
      <Cell v={r.time} cls={g} sel={r.sel} />
      <Cell v={r.mcs} cls={g} sel={r.sel} />
      <Cell v={r.st} cls={g} sel={r.sel} />
      <Cell v={r.fl} cls={g} sel={r.sel} />
      <Cell v={r.depth} cls={g} sel={r.sel} />
      <Cell v={r.step} cls={g} sel={r.sel} />
    </div>
  );
};

const Guides = () => {
  const dots = "#9a9a9a";
  const v: [number, number, number][] = [
    [28.5, 24, 30],
    [47.5, 48, 246],
    [66.5, 72, 198],
    [66.5, 264, 510],
    [85.5, 96, 108],
    [85.5, 144, 180],
    [85.5, 216, 228],
    [85.5, 288, 348],
    [85.5, 384, 444],
    [85.5, 480, 492],
    [85.5, 528, 564],
  ];
  const h = [108, 156, 180, 228, 300, 324, 348, 396, 420, 444, 492, 540, 564];
  return (
    <svg className="absolute left-0 top-0 pointer-events-none" width="284" height="600" fill="none">
      {v.map(([x, a, b], i) => (
        <path key={i} d={`M${x} ${a}V${b}`} stroke={dots} strokeDasharray="1 1" />
      ))}
      {h.map((y, i) => (
        <path key={i} d={`M85 ${y + 0.5}H95`} stroke={dots} strokeDasharray="1 1" />
      ))}
    </svg>
  );
};

const Head = ({ t }: { t: string }) => <div className="h-full pl-[7px] border-r-2 last:border-r-0 border-[#e2e2e2] whitespace-nowrap">{t}</div>;

const Table = () => (
  <div className="ml-[17px] w-[946px] border-2 border-[#e4e4e4] h-[767px] overflow-hidden font-['Noto_Sans','Noto_Sans_CJK_SC',sans-serif] text-[15px]">
    <div className={`${COLS} h-[24px] bg-[#f0f0f0] border-b-2 border-[#dadada] leading-[24px] text-[#222]`}>
      {["标题", "工具", "时间", "机床坐标系", "余量", "底面余量", "切削深度", "步距"].map((t) => (
        <Head key={t} t={t} />
      ))}
    </div>
    <div className="relative h-[719px] overflow-hidden">
      {rows.map((r, i) => (
        <TreeRow key={i} r={r} i={i} />
      ))}
      {Array.from({ length: 6 }).map((_, i) => (
        <div key={i} className={`${COLS} h-[24px] border-b border-[#e6e6e6] ${i % 2 ? "bg-[#f9f9f9]" : "bg-white"}`}>
          {Array.from({ length: 8 }).map((_, j) => (
            <div key={j} className="h-full border-r-2 last:border-r-0 border-[#ececec]" />
          ))}
        </div>
      ))}
      <Guides />
    </div>
    <div className="h-[20px] bg-[#f0f0f0] flex items-center">
      <div className="w-[20px] flex justify-center">
        <Svg w={7} h={11}><path d="M6 1L1.500 5.500L6 10" stroke="#333" strokeWidth="1.4" /></Svg>
      </div>
      <div className="w-[626px] h-[19px] bg-[#a6a6a6]" />
      <div className="flex-1" />
      <div className="w-[22px] flex justify-center">
        <Svg w={7} h={11}><path d="M1 1L5.500 5.500L1 10" stroke="#333" strokeWidth="1.4" /></Svg>
      </div>
    </div>
  </div>
);

const NavTree = ({ children }: { children?: React.ReactNode }) => (
  <Svg w={30} h={26}>
    {children}
    <path d="M17 8H27V25H17Z" fill="#fff" stroke="#222" />
    <path d="M20 12H23V14H20ZM20 16H24V18H20ZM20 20H24V22H20Z" stroke="#333" strokeWidth=".8" />
  </Svg>
);
const NavBar = () => (
  <div className="ml-[15px] h-[32px] flex items-center gap-[2px]">
    <div className="w-[32px] h-[32px] bg-[#8ac1d2] flex items-center justify-center">
      <NavTree><path d="M2 2H14V12H2Z" fill="#ddd" stroke="#666" /><path d="M4 4H12V10H4Z" stroke="#888" strokeDasharray="1 1" /><path d="M9 6H20V18H9Z" fill="#c0c0c0" stroke="#666" /></NavTree>
    </div>
    <div className="w-[32px] h-[32px] flex items-center justify-center">
      <NavTree><path d="M3 4L14 1V22L3 25Z" fill="#ee7a1a" /><path d="M3 10L14 6M3 15L14 11M3 20L14 16" stroke="#a04a08" strokeWidth="1.5" /><path d="M12 0H20V10H12Z" fill="#aaa" /></NavTree>
    </div>
    <div className="w-[32px] h-[32px] flex items-center justify-center">
      <NavTree><path d="M8 3L17 0L24 8L19 24L11 21Z" fill="#8d8d8d" stroke="#666" /><rect x="1" y="6" width="13" height="12" rx="5" fill="#f08a1d" /></NavTree>
    </div>
    <div className="w-[34px] h-[32px] flex items-center justify-center">
      <NavTree><path d="M2 1L6 5L10 1L14 5L18 1L22 5L26 1V7H2Z M1 12H16V16H1Z" stroke="#333" fill="#fff" /></NavTree>
    </div>
    <div className="w-[32px] h-[32px] border border-[#8a8a8a] flex items-center justify-center ml-[1px]">
      <Svg w={26} h={26}>
        <path d="M1 2H20V17H10 M1 2V18H8 M1 5H20" stroke="#444" />
        <circle cx="18" cy="19" r="6" fill="#fff" stroke="#333" />
        <path d="M18 15V23M14 19H22" stroke="#333" />
      </Svg>
    </div>
    <div className="w-[32px] h-[32px] border border-[#cccccc] flex items-center justify-center ml-[3px]">
      <Svg w={26} h={26}>
        <path d="M1 2H20V17H10 M1 2V18H10 M1 5H20" stroke="#aaa" />
        <path d="M13 13L25 25M25 13L13 25" stroke="#bbb" />
      </Svg>
    </div>
  </div>
);

/* ---------- side dock ---------- */
const G = "#5a5a5a";
const side: { mt: string; el: React.ReactNode; active?: boolean }[] = [
  { mt: "mt-[1px]", el: <Svg w={18} h={18}><circle cx="9" cy="9" r="6" stroke="#111" strokeWidth="1.4" /><circle cx="9" cy="9" r="1.200" fill="#111" /><path d="M9 0V3M9 15V18M0 9H3M15 9H18" stroke="#111" strokeWidth="1.4" /></Svg> },
  { mt: "mt-[24px]", el: <Svg w={20} h={24}><path d="M1 8L12 1L19 5V14L13 18V22L6 24L1 20Z" fill="#f2f2f2" stroke={G} /><path d="M1 8L8 12L19 5M8 12V24M1 14L8 18L13 15" stroke={G} /></Svg> },
  { mt: "mt-[20px]", el: <Svg w={26} h={24}><path d="M1 8L9 2L17 6V20L7 23L1 20Z" fill="#c8c8c8" stroke={G} /><path d="M1 6L8 2L15 6L8 10Z" fill="#f8a340" /><path d="M1 6L8 10V16L1 13Z" fill="#ec7a10" /><path d="M8 10L15 6V12L8 16Z" fill="#f39a25" /><path d="M12 12L25 23M25 12L12 23M12 12V23M25 12V23" stroke="#111" /></Svg> },
  { mt: "mt-[19px]", el: <Svg w={25} h={24}><path d="M1 16L9 1L13 3L14 12L24 17L14 23H7Z" fill="#c6c6c6" stroke={G} /><ellipse cx="11" cy="17" rx="5" ry="3" fill="#888" stroke="#444" /></Svg> },
  { mt: "mt-[19px]", el: <Svg w={24} h={26}><path d="M1 10H14V24H1Z" fill="#e8e8e8" stroke="#333" /><path d="M5 10H11V20H5Z" fill="#8da8c8" /><path d="M14 13H20M16 20H22V23H16Z" stroke="#333" /><path d="M17 2H23V7H17Z" fill="#fff" stroke="#e33" /><path d="M9 8Q10 3 15 4" stroke="#ef7d12" strokeWidth="2" /></Svg> },
  { mt: "mt-[16px]", el: <Svg w={20} h={24}><path d="M1 6L12 1L19 4V19L8 24L1 20Z M1 6L8 10L19 4M8 10V24M5 4L12 7V20" stroke={G} fill="#f4f4f4" /></Svg> },
  { mt: "mt-[20px]", el: <Svg w={25} h={24}><path d="M1 16L9 3L13 5L14 12L24 17L14 23H7Z" fill="#c6c6c6" stroke={G} /><ellipse cx="11" cy="17" rx="5" ry="3" fill="#888" stroke="#444" /><path d="M14 3H22V10M13 1L16 5M20 1L24 4" stroke="#ef7d12" /></Svg> },
  { mt: "mt-[17px]", el: <Svg w={25} h={24}><path d="M1 10L12 4L22 10L12 16Z" fill="#eee" stroke={G} /><path d="M1 10V16L12 22V16M22 10V15" stroke={G} /><path d="M1 4L8 1M3 1L1 4L4 6" stroke="#ef7d12" /><circle cx="20" cy="18" r="5" fill="#fff" stroke="#222" /></Svg> },
  { mt: "mt-[4px]", active: true, el: <Svg w={22} h={24}><path d="M3 1H7V12L5 14L3 12Z" fill="#2a63d8" /><path d="M8 3H15M8 6H13M8 9H20" stroke="#2a63d8" /><path d="M4 14V24M4 19H10L13 14H16V22H8" stroke="#1d3fb8" /></Svg> },
  { mt: "mt-[19px]", el: <Svg w={24} h={24}><path d="M3 3V23M21 1V23M1 8H6V13H1ZM1 17H6V21H1ZM18 4H23V9H18ZM18 14H23V20H18Z" stroke="#1527a8" fill="#1d35c4" /><path d="M9 8L14 12L9 16Z" fill="#d84a2a" /><path d="M14 5V10M14 14V18" stroke="#1d35c4" /></Svg> },
  { mt: "mt-[19px]", el: <Svg w={26} h={24}><path d="M1 12L14 1L24 3V10L11 21L1 20Z" fill="#f3c9a0" stroke="#7a56c8" /><path d="M6 9L19 9M3 14H14M8 5L10 20M14 2L16 14" stroke="#7a56c8" /><path d="M8 14L18 11L26 15V22L16 24L8 20Z" fill="#ee8a1f" /><path d="M16 17L26 15V22L16 24Z" fill="#3d8fe0" /></Svg> },
  { mt: "mt-[30px]", el: <Svg w={26} h={24}><circle cx="9" cy="15" r="8" fill="#7a7a7a" stroke="#333" /><path d="M9 11V19" stroke="#fff" strokeWidth="1.6" /><circle cx="9" cy="8.500" r="1" fill="#fff" /><path d="M10 4Q18 4 20 12M12 1Q22 2 24 12" stroke="#aaa" /></Svg> },
  { mt: "mt-[30px]", el: <Svg w={25} h={24}><path d="M1 1H24V23H1Z M1 5H24" stroke="#555" fill="#f4f4f4" /><circle cx="12" cy="14" r="7" fill="#2a7d9c" /><path d="M8 12L12 9L15 13L11 17ZM15 10L18 13" stroke="#bfe3ee" /></Svg> },
  { mt: "mt-[29px]", el: <Svg w={24} h={24}><circle cx="12" cy="12" r="11" stroke="#333" /><path d="M12 6V13H6 M12 1V3M12 21V23M1 12H3M21 12H23" stroke="#333" /></Svg> },
  { mt: "mt-[19px]", el: <Svg w={24} h={24}><defs><linearGradient id="rb" x1="0" y1="0" x2="0" y2="1"><stop offset="0" stopColor="#ee2222" /><stop offset=".35" stopColor="#f4e40a" /><stop offset=".6" stopColor="#10d85a" /><stop offset="1" stopColor="#1030e8" /></linearGradient></defs><rect x="2" y="1" width="8" height="22" fill="url(#rb)" /><path d="M13 9L21 22" stroke="#111" strokeWidth="2.400" /></Svg> },
  { mt: "mt-[19px]", el: <Svg w={26} h={24}><path d="M3 2L10 1V16L6 20L3 16Z" fill="#3b8fe0" /><path d="M11 4L22 2M12 7L20 6" stroke="#2a63d8" strokeWidth="1.5" /><path d="M13 8L23 21" stroke="#111" strokeWidth="2.400" /><path d="M1 21L10 22" stroke="#e6c42a" strokeWidth="2" /></Svg> },
  { mt: "mt-[17px]", el: <Svg w={25} h={24}><path d="M1 3H8L10 1H14V6H24V23H1Z" fill="#fff" stroke="#444" /><path d="M6 9L19 20M19 9L6 20" stroke="#333" strokeWidth="2.600" /><path d="M4 7L8 11M17 7L21 11" stroke="#666" strokeWidth="1.500" /></Svg> },
  { mt: "mt-[18px]", el: <Svg w={25} h={24}><path d="M1 9H14V22H1Z" fill="#e8e8e8" stroke="#111" strokeWidth="1.2" /><path d="M4 9H10V20H4Z" fill="#8b8fb8" /><path d="M14 12H20M15 19H22V22H15Z" stroke="#111" /><path d="M15 2H20L22 4H25V10H15Z" fill="#e6d45a" stroke="#7ba52a" /></Svg> },
];
const Dock = () => (
  <div className="w-[32px] shrink-0 bg-[#dcdcdc] border-l-2 border-[#a8a8a8] flex flex-col items-center pr-[5px]">
    {side.map((s, i) =>
      s.active ? (
        <div key={i} className={`${s.mt} mb-[-11px] w-[30px] h-[46px] bg-white border-t border-b border-r border-[#a8a8a8] flex items-center justify-center pr-[3px] -ml-[2px] self-start shrink-0`}>{s.el}</div>
      ) : (
        <div key={i} className={`${s.mt} h-[24px] flex items-center justify-center shrink-0`}>{s.el}</div>
      )
    )}
  </div>
);

export default function App() {
  return (
    <div className="w-[1920px] h-[1080px] overflow-hidden flex flex-col bg-white font-['Noto_Sans','Noto_Sans_CJK_SC',sans-serif]">
      {/* title bar */}
      <div className="h-[37px] relative shrink-0 flex items-center pb-[6px] bg-[linear-gradient(to_right,#00668a,#05749e_45%,#07769f)] text-white">
        <div className="absolute left-[809px] top-0 w-[300px] h-px bg-[#1c2a33]"><div className="ml-[60px] w-[60px] h-px bg-[#1874c8]" /></div>
        <div className="w-[47px] pl-[4px] text-[26px] font-bold leading-[31px] font-['Liberation_Sans',sans-serif]">NX</div>
        <Sep />
        <Slot w="w-[30px]"><SaveI /></Slot>
        <Sep />
        <Slot w="w-[26px]"><UndoI /></Slot>
        <Slot w="w-[20px]"><Caret c="#fff" /></Slot>
        <Sep />
        <div className="w-[3px]" />
        <Slot w="w-[23px]"><FanI /></Slot>
        <Slot w="w-[23px]"><CopyI /></Slot>
        <Slot w="w-[23px]"><PasteI /></Slot>
        <Slot w="w-[23px]"><TargetI /></Slot>
        <div className="w-[2px]" />
        <Sep />
        <Slot w="w-[26px]"><SwapI /></Slot>
        <Slot w="w-[20px]"><Caret c="#fff" /></Slot>
        <Sep />
        <Slot w="w-[28px]"><MicI /></Slot>
        <Sep />
        <Slot w="w-[28px]"><EraserI /></Slot>
        <Sep />
        <Slot w="w-[27px]"><WinsI /></Slot>
        <Slot w="w-[20px]"><WinI /></Slot>
        <div className="text-[14px] w-[29px] ml-[2px] whitespace-nowrap">窗口</div>
        <Caret c="#fff" className="ml-[3px]" />
        <div className="w-[10px]" />
        <Svg w={10} h={10}><path d="M0 1H10M0 5H10M0 9H10" stroke={W} /></Svg>
        <div className="text-[14px] w-[30px] ml-[6px] whitespace-nowrap">菜单</div>
        <Caret c="#fff" className="ml-[3px]" />
        <Svg w={9} h={8} className="ml-[6px]"><path d="M0 0H9M0 3H9L4.500 8Z" stroke="#fff" fill="#fff" strokeWidth=".8" /></Svg>
        <div className="absolute left-[1093px] top-[3px] text-[16px] leading-[24px] whitespace-nowrap">NX - 加工</div>
        <div className="absolute left-[1740px] top-[4px] text-[16px] leading-[24px] font-bold font-['Open_Sans',sans-serif]">SIEMENS</div>
        <div className="absolute right-0 top-0 h-[31px] w-[90px] flex items-center">
          <div className="ml-[4px] w-[8px] h-[2px] mt-[9px] bg-white" />
          <Svg w={12} h={12} className="ml-[17px]"><path d="M3 3V1H11V8H9M1 3H9V11H1Z" stroke="#fff" /></Svg>
          <Svg w={12} h={12} className="ml-[19px]"><path d="M.5 .5L11.500 11.500M11.500 .5L.5 11.500" stroke="#fff" strokeWidth="1.400" /></Svg>
        </div>
      </div>

      {/* menu bar */}
      <div className="h-[25px] shrink-0 flex items-start bg-[linear-gradient(to_right,#00668a,#05749e_45%,#07769f)] text-white text-[16px] relative">
        <div className="w-[90px] text-center leading-[20px]">文件(F)</div>
        <div className="ml-[6px] w-[80px] h-[23px] text-center leading-[20px] text-[#fbd087] border-b-[2px] border-[#f5c04e]">几何体</div>
        {["主页", "分析", "曲线", "视图", "选择", "装配", "渲染", "工具"].map((t) => (
          <div key={t} className="w-[64px] text-center leading-[20px] shrink-0">{t}</div>
        ))}
        <div className="w-[95px] text-center leading-[20px] whitespace-nowrap">应用模块</div>
        <div className="w-[104px] text-center leading-[20px] whitespace-nowrap">星空 V7.4</div>
        <div className="w-[62px] text-center leading-[20px]">草图</div>
        <div className="flex-1" />
        <div className="w-[157px] h-[26px] -mt-[4px] bg-white border border-[#777] flex items-center justify-between text-[14px] text-[#aaa] pr-[2px]">
          查找命令
          <Svg w={17} h={17}><circle cx="10.500" cy="6.500" r="5.500" stroke="#333" /><path d="M7 11L1 16" stroke="#333" strokeWidth="2" /></Svg>
        </div>
        <div className="w-[111px] h-[26px] -mt-[4px] flex items-center pl-[10px]">
          <Svg w={17} h={18}><path d="M1 5V1H5M12 1H16V5M16 13V17H12M5 17H1V13" stroke="#fff" /></Svg>
          <Svg w={17} h={10} className="ml-[9px]"><path d="M.5 9.500L8.500 1L16.500 9.500" stroke="#fff" /></Svg>
          <Svg w={16} h={16} className="ml-[9px]"><circle cx="8" cy="8" r="7.400" stroke="#fff" /><text x="4.700" y="12" fontSize="11" fill="#fff" fontFamily="Liberation Sans">?</text></Svg>
          <div className="ml-[15px] text-[20px] leading-[20px] font-['Liberation_Sans',sans-serif]">!</div>
        </div>
      </div>

      <Ribbon />
      <SelBar />

      {/* main area */}
      <div className="flex-1 min-h-0 flex">
        <div className="w-[912px] shrink-0 flex flex-col border-r-2 border-[#a8a8a8]">
          <div className="h-[28px] shrink-0 flex items-center text-[15px] bg-white">
            <div className="w-[108px] flex items-center pl-[6px] gap-[4px] text-[#222]">
              <Svg w={15} h={17}><path d="M3 1L12 3V15L3 16Z M1 3V15" stroke="#444" /><circle cx="8" cy="10" r="4" stroke="#444" /><path d="M6 12L10 8" stroke="#444" /></Svg>
              <span className="whitespace-nowrap">发现中心</span>
            </div>
            <div className="w-[122px] h-full bg-[#00628a] text-white flex items-center pl-[6px] gap-[2px] text-[16px] whitespace-nowrap">
              <Svg w={18} h={20}><path d="M7 1H1V7H6V12H1" stroke="#fff" strokeWidth="1.200" /><path d="M10 9Q13 6 16 9M16 6V9H13M16 15Q13 18 10 15M10 18V15H13" stroke="#fff" strokeWidth="1.100" /></Svg>
              4x-2.prt
              <Svg w={11} h={12} className="ml-[4px]"><path d="M1 1H7L10 4V11H1Z" stroke="#fff" strokeWidth="1.400" /></Svg>
              <Svg w={9} h={9} className="ml-[4px]"><path d="M1 1L8 8M8 1L1 8" stroke="#fff" strokeWidth="1.800" /></Svg>
            </div>
          </div>
          <div className="h-[1px] bg-[#00628a] shrink-0" />
          <div className="h-[821px] shrink-0 bg-[#232429] border-t-[1px] border-l-2 border-b border-r-0 border-[#efa765] overflow-hidden">
            <CadView />
          </div>
        </div>
        <div className="flex-1 min-w-0 flex flex-col">
          <div className="h-[36px] shrink-0 flex items-center pl-[14px] pb-[4px] text-[15px] text-[#222]">
            <div className="w-[14px] h-[13px] border-[1.500px] border-[#222] border-t-2" />
            <span className="ml-[11px]">工序导航器</span>
          </div>
          <NavBar />
          <div className="mt-[4px]"><Table /></div>
          <div className="mt-[7px] h-px bg-[#cfcfcf] mr-[6px]" />
        </div>
        <Dock />
      </div>

      {/* status */}
      <div className="h-[23px] shrink-0 border-t border-[#b4b4b4] bg-white flex items-center justify-end pr-[3px] text-[14px] tracking-[.9px] text-[#555] font-['Liberation_Serif','Noto_Sans_CJK_SC',serif]">
        UG爱好者论坛@油鸡初学者
      </div>
      <div className="h-[2px] shrink-0 bg-[#22262a] flex">
        <div className="ml-[494px] w-[60px] bg-[#555]" />
      </div>
    </div>
  );
}
